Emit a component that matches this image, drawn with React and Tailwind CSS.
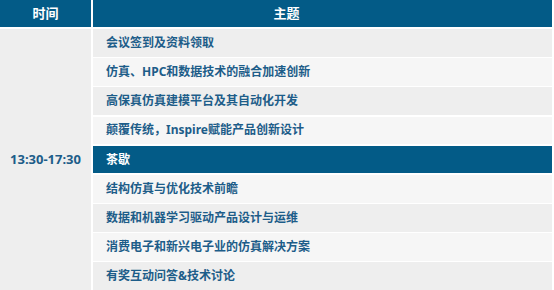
const topics = [
  '会议签到及资料领取',
  '仿真、HPC和数据技术的融合加速创新',
  '高保真仿真建模平台及其自动化开发',
  '颠覆传统，Inspire赋能产品创新设计',
  '茶歇',
  '结构仿真与优化技术前瞻',
  '数据和机器学习驱动产品设计与运维',
  '消费电子和新兴电子业的仿真解决方案',
  '有奖互动问答&技术讨论',
]

const font = { fontFamily: '"Noto Sans", "Noto Sans CJK SC", sans-serif' }

export default function App() {
  return (
    <div
      className="w-[554px] h-[290px] bg-white pr-[2px] flex flex-col gap-[2px]"
      style={font}
    >
      <div className="h-[27px] flex gap-[2px] text-white font-bold text-[13px]">
        <div className="w-[91px] bg-[#035b87] flex items-center justify-center">时间</div>
        <div className="flex-1 bg-[#035b87] flex items-center justify-center pr-[72px]">主题</div>
      </div>
      <div className="flex-1 flex gap-[2px]">
        <div className="w-[91px] bg-[#eeeeee] flex items-center justify-center text-[13px] font-bold text-[#1d5d89]">
          13:30-17:30
        </div>
        <div className="flex-1 flex flex-col gap-[1.5px]">
          {topics.map((t, i) => {
            const tea = t === '茶歇'
            const bg = tea ? 'bg-[#035b87] text-white' : i % 2 === 0 ? 'bg-[#eeeeee] text-[#1d5d89]' : 'bg-[#f6f6f6] text-[#1d5d89]'
            return (
              <div key={i} className={`flex-1 flex items-center pl-[13px] text-[12px] font-bold ${bg}`}>
                {t}
              </div>
            )
          })}
        </div>
      </div>
    </div>
  )
}
